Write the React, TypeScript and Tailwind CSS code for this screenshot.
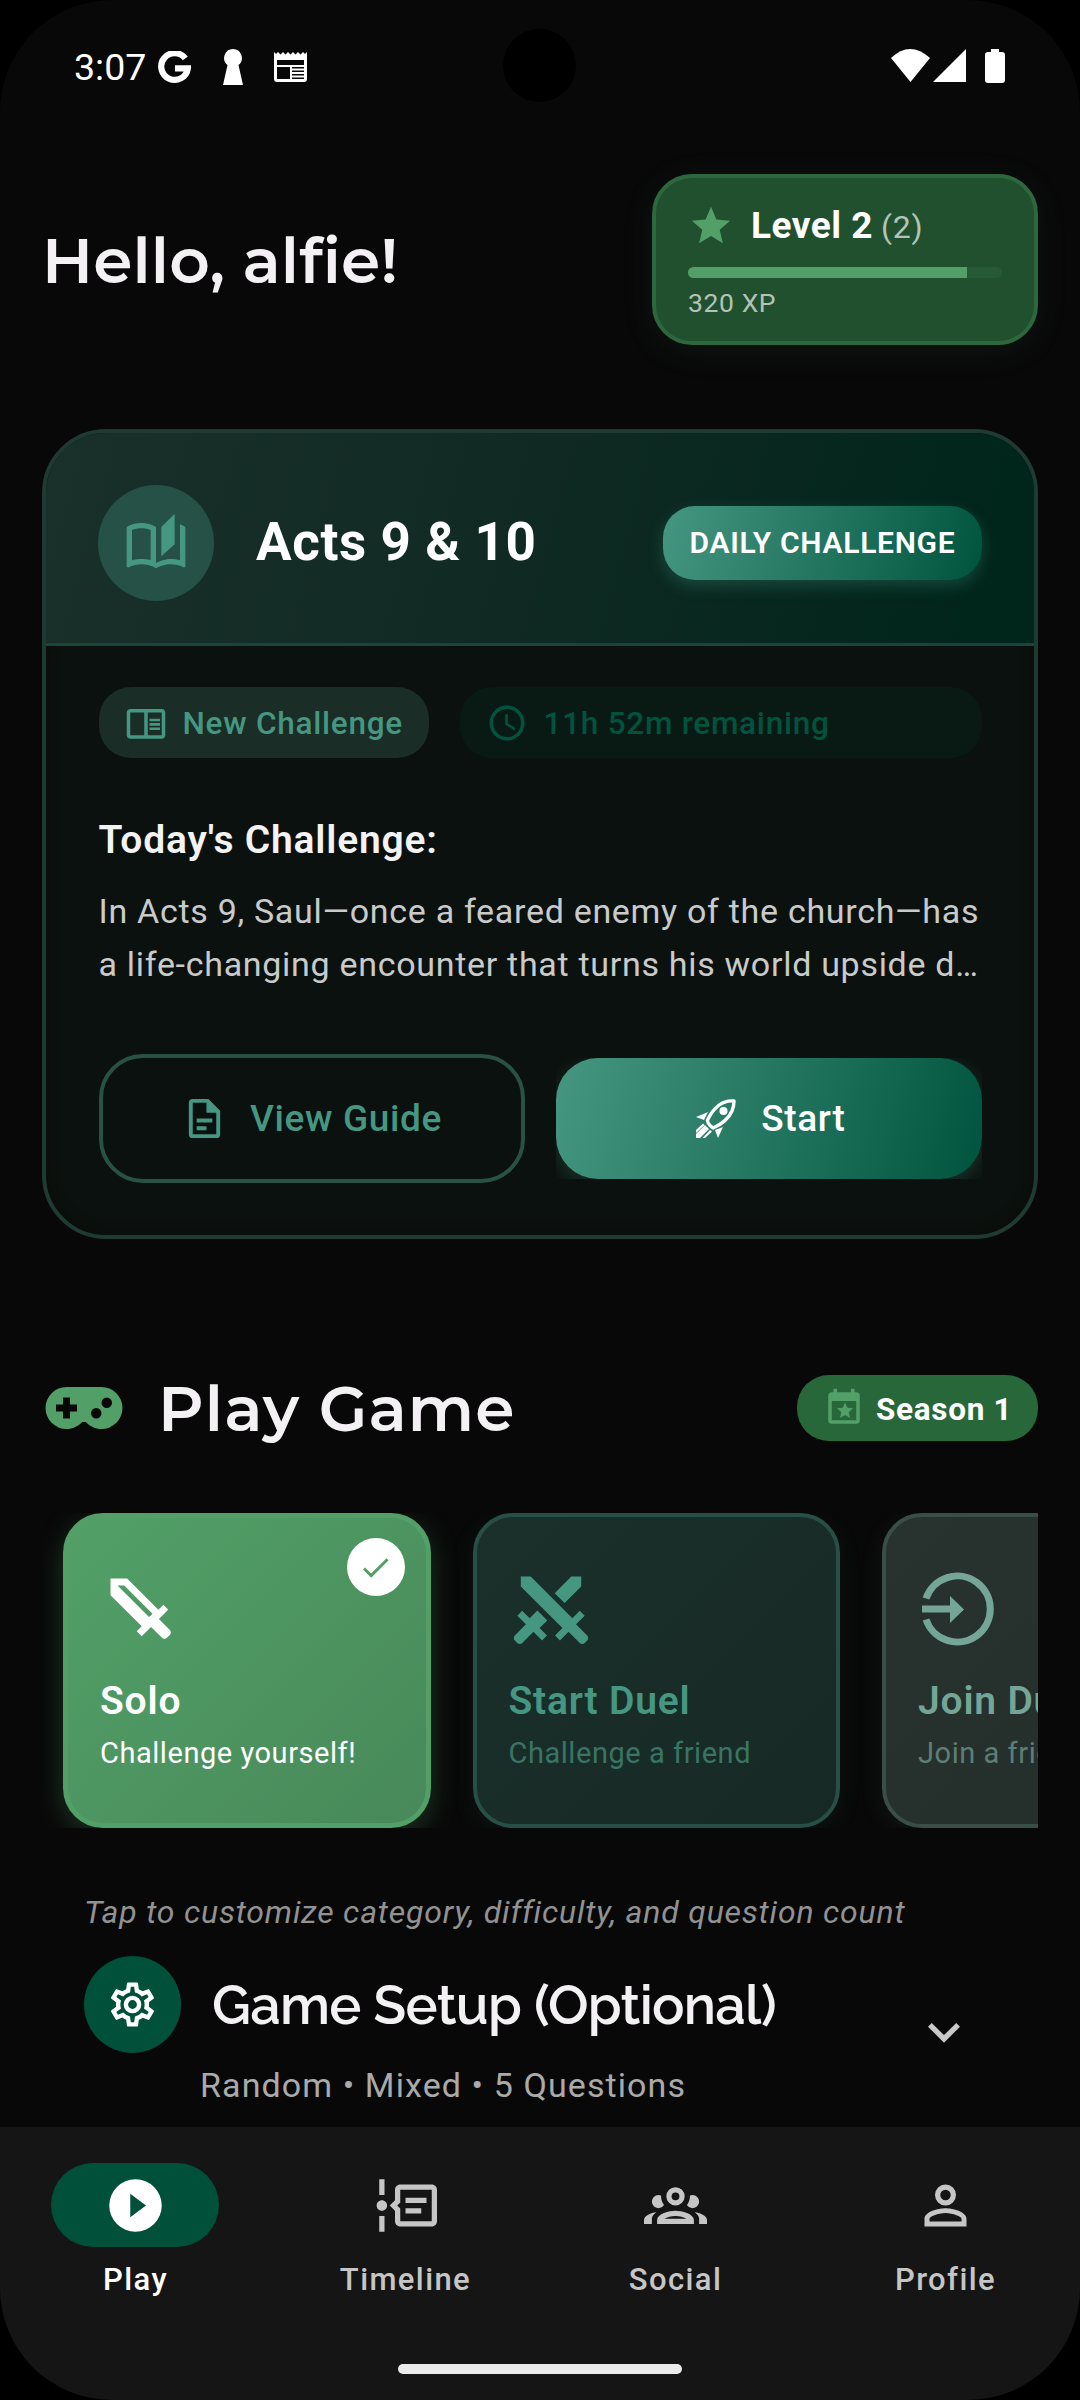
import React from "react";
import { MdOutlineChromeReaderMode, MdStar, MdCheck } from "react-icons/md";

const P = {
  controller:
    "M7,6H17A6,6 0 0,1 23,12A6,6 0 0,1 17,18C15.22,18 13.63,17.23 12.53,16H11.47C10.37,17.23 8.78,18 7,18A6,6 0 0,1 1,12A6,6 0 0,1 7,6M6,9V11H4V13H6V15H8V13H10V11H8V9H6M15.5,12A1.5,1.5 0 0,0 14,13.5A1.5,1.5 0 0,0 15.5,15A1.5,1.5 0 0,0 17,13.5A1.5,1.5 0 0,0 15.5,12M18.5,9A1.5,1.5 0 0,0 17,10.5A1.5,1.5 0 0,0 18.5,12A1.5,1.5 0 0,0 20,10.5A1.5,1.5 0 0,0 18.5,9Z",
  sword:
    "M6.92,5H5L14,14L15,13.06M19.96,19.12L19.12,19.96C18.73,20.35 18.1,20.35 17.71,19.96L14.59,16.84L11.91,19.5L10.5,18.09L11.92,16.67L3,7.75V3H7.75L16.67,11.92L18.09,10.5L19.5,11.91L16.83,14.58L19.95,17.7C20.35,18.1 20.35,18.73 19.96,19.12Z",
  swordCross:
    "M6.2,2.44L18.1,14.34L20.22,12.22L21.63,13.63L19.16,16.1L22.34,19.28C22.73,19.67 22.73,20.3 22.34,20.69L21.63,21.4C21.24,21.79 20.61,21.79 20.22,21.4L17,18.23L14.56,20.7L13.15,19.29L15.27,17.17L3.37,5.27V2.44H6.2M15.89,10L20.63,5.26V2.44H17.8L13.06,7.18L15.89,10M10.94,15L8.11,12.13L5.9,14.34L3.78,12.22L2.37,13.63L4.84,16.1L1.66,19.29C1.27,19.68 1.27,20.31 1.66,20.7L2.37,21.41C2.76,21.8 3.39,21.8 3.78,21.41L7,18.23L9.44,20.7L10.85,19.29L8.73,17.17L10.94,15Z",
  book: "M19 1L14 6V17L19 12.5V1M21 5V18.5C19.9 18.15 18.7 18 17.5 18C15.8 18 13.35 18.65 12 19.5V6C10.55 4.9 8.45 4.5 6.5 4.5C4.55 4.5 2.45 4.9 1 6V20.65C1 20.9 1.25 21.15 1.5 21.15C1.6 21.15 1.65 21.1 1.75 21.1C3.1 20.45 5.05 20 6.5 20C8.45 20 10.55 20.4 12 21.5C13.35 20.65 15.8 20 17.5 20C19.15 20 20.85 20.3 22.25 21.05C22.35 21.1 22.4 21.1 22.5 21.1C22.75 21.1 23 20.85 23 20.6V6C22.4 5.55 21.75 5.25 21 5M10 18.41C8.75 18.09 7.5 18 6.5 18C5.44 18 4.18 18.19 3 18.5V7.13C3.91 6.73 5.14 6.5 6.5 6.5C7.86 6.5 9.09 6.73 10 7.13V18.41Z",
  clock:
    "M12,20A8,8 0 0,0 20,12A8,8 0 0,0 12,4A8,8 0 0,0 4,12A8,8 0 0,0 12,20M12,2A10,10 0 0,1 22,12A10,10 0 0,1 12,22C6.47,22 2,17.5 2,12A10,10 0 0,1 12,2M12.5,7V12.25L17,14.92L16.25,16.15L11,13V7H12.5Z",
  file: "M6,2A2,2 0 0,0 4,4V20A2,2 0 0,0 6,22H18A2,2 0 0,0 20,20V8L14,2H6M6,4H13V9H18V20H6V4M8,12V14H16V12H8M8,16V18H13V16H8Z",
  calendar:
    "M19,19H5V8H19M19,3H18V1H16V3H8V1H6V3H5A2,2 0 0,0 3,5V19A2,2 0 0,0 5,21H19A2,2 0 0,0 21,19V5A2,2 0 0,0 19,3M9.7,17.7L10.5,14.4L8,12.2L11.3,11.9L12.6,8.9L13.9,11.9L17.2,12.2L14.7,14.4L15.5,17.7L12.6,16Z",
  cog: "M12,8A4,4 0 0,1 16,12A4,4 0 0,1 12,16A4,4 0 0,1 8,12A4,4 0 0,1 12,8M12,10A2,2 0 0,0 10,12A2,2 0 0,0 12,14A2,2 0 0,0 14,12A2,2 0 0,0 12,10M10,22C9.75,22 9.54,21.82 9.5,21.58L9.13,18.93C8.5,18.68 7.96,18.34 7.44,17.94L4.95,18.95C4.73,19.03 4.46,18.95 4.34,18.73L2.34,15.27C2.21,15.05 2.27,14.78 2.46,14.63L4.57,12.97L4.5,12L4.57,11L2.46,9.37C2.27,9.22 2.21,8.95 2.34,8.73L4.34,5.27C4.46,5.05 4.73,4.96 4.95,5.05L7.44,6.05C7.96,5.66 8.5,5.32 9.13,5.07L9.5,2.42C9.54,2.18 9.75,2 10,2H14C14.25,2 14.46,2.18 14.5,2.42L14.87,5.07C15.5,5.32 16.04,5.66 16.56,6.05L19.05,5.05C19.27,4.96 19.54,5.05 19.66,5.27L21.66,8.73C21.79,8.95 21.73,9.22 21.54,9.37L19.43,11L19.5,12L19.43,13L21.54,14.63C21.73,14.78 21.79,15.05 21.66,15.27L19.66,18.73C19.54,18.95 19.27,19.04 19.05,18.95L16.56,17.95C16.04,18.34 15.5,18.68 14.87,18.93L14.5,21.58C14.46,21.82 14.25,22 14,22H10M11.25,4L10.88,6.61C9.68,6.86 8.62,7.5 7.85,8.39L5.44,7.35L4.69,8.65L6.8,10.2C6.4,11.37 6.4,12.64 6.8,13.8L4.68,15.36L5.43,16.66L7.86,15.62C8.63,16.5 9.68,17.14 10.87,17.38L11.24,20H12.76L13.13,17.39C14.32,17.14 15.37,16.5 16.14,15.62L18.57,16.66L19.32,15.36L17.2,13.81C17.6,12.64 17.6,11.37 17.2,10.2L19.31,8.65L18.56,7.35L16.15,8.39C15.38,7.5 14.32,6.86 13.12,6.62L12.75,4H11.25Z",
  play: "M10,16.5V7.5L16,12M12,2A10,10 0 0,0 2,12A10,10 0 0,0 12,22A10,10 0 0,0 22,12A10,10 0 0,0 12,2Z",
  account:
    "M12,4A4,4 0 0,1 16,8A4,4 0 0,1 12,12A4,4 0 0,1 8,8A4,4 0 0,1 12,4M12,6A2,2 0 0,0 10,8A2,2 0 0,0 12,10A2,2 0 0,0 14,8A2,2 0 0,0 12,6M12,13C14.67,13 20,14.33 20,17V20H4V17C4,14.33 9.33,13 12,13M12,14.9C9.03,14.9 5.9,16.36 5.9,17V18.1H18.1V17C18.1,16.36 14.97,14.9 12,14.9Z",
  group:
    "M12,5A3.5,3.5 0 0,0 8.5,8.5A3.5,3.5 0 0,0 12,12A3.5,3.5 0 0,0 15.5,8.5A3.5,3.5 0 0,0 12,5M12,7A1.5,1.5 0 0,1 13.5,8.5A1.5,1.5 0 0,1 12,10A1.5,1.5 0 0,1 10.5,8.5A1.5,1.5 0 0,1 12,7M5.5,8A2.5,2.5 0 0,0 3,10.5C3,11.44 3.53,12.25 4.29,12.68C4.65,12.88 5.06,13 5.5,13C5.94,13 6.35,12.88 6.71,12.68C7.08,12.47 7.39,12.17 7.62,11.81C6.89,10.86 6.5,9.7 6.5,8.5C6.5,8.41 6.5,8.31 6.5,8.22C6.2,8.08 5.86,8 5.5,8M18.5,8C18.14,8 17.8,8.08 17.5,8.22C17.5,8.31 17.5,8.41 17.5,8.5C17.5,9.7 17.11,10.86 16.38,11.81C16.5,12 16.63,12.15 16.78,12.3C16.94,12.45 17.1,12.58 17.29,12.68C17.65,12.88 18.06,13 18.5,13C18.94,13 19.35,12.88 19.71,12.68C20.47,12.25 21,11.44 21,10.5A2.5,2.5 0 0,0 18.5,8M12,14C9.66,14 5,15.17 5,17.5V19H19V17.5C19,15.17 14.34,14 12,14M4.71,14.55C2.78,14.78 0,15.76 0,17.5V19H3V17.07C3,16.06 3.69,15.22 4.71,14.55M19.29,14.55C20.31,15.22 21,16.06 21,17.07V19H24V17.5C24,15.76 21.22,14.78 19.29,14.55M12,16C13.53,16 15.24,16.5 16.23,17H7.77C8.76,16.5 10.47,16 12,16Z",
  timeline:
    "M4 2V8H2V2H4M2 22H4V16H2V22M5 12C5 13.11 4.11 14 3 14S1 13.11 1 12 1.9 10 3 10 5 10.89 5 12M24 6V18C24 19.11 23.11 20 22 20H10C8.89 20 8 19.11 8 18V14L6 12L8 10V6C8 4.89 8.89 4 10 4H22C23.11 4 24 4.89 24 6M22 6H10V10.83L8.83 12L10 13.17V18H22V6M12 9H20V11H12V9M12 13H18V15H12V13Z",
  chevron: "M7.41,8.58L12,13.17L16.59,8.58L18,10L12,16L6,10L7.41,8.58Z",
};

function Icon({ d, className = "" }: { d: string; className?: string }) {
  return (
    <svg viewBox="0 0 24 24" fill="currentColor" fillRule="evenodd" className={`shrink-0 ${className}`}>
      <path d={d} />
    </svg>
  );
}

function StatusBar() {
  return (
    <header className="flex h-[132px] items-center pl-[74px] pr-[74px] text-white">
      <span className="w-[84px] whitespace-nowrap pt-[2px] text-[37.5px] leading-[44px]">3:07</span>
      <svg viewBox="0 0 32 32" className="mt-[2px] h-[33px] w-[33px]" fill="none" stroke="white" strokeWidth="6">
        <path d="M26.5 7.2A13 13 0 1 0 29 16.8H16.5" />
      </svg>
      <svg viewBox="0 0 20 36" className="ml-[32px] mt-[2px] h-[36px] w-[20px]" fill="white">
        <path d="M10 0a9 9 0 0 1 5.5 16L20 36H0L4.500 16A9 9 0 0 1 10 0Z" />
      </svg>
      <svg viewBox="0 0 33 30" className="ml-[31px] mt-[2px] h-[30px] w-[33px]">
        <path fill="white" d="M0 0l2 2 2-2 2.500 2.500L9 0l2.500 2.500L14 0l2.500 2.500L19 0l2.500 2.500L24 0l2.500 2.500L29 0l2 2 2-2v27a3 3 0 0 1-3 3H3a3 3 0 0 1-3-3Z" />
        <path fill="#080808" d="M3 8h27v5H3zM3 15h13v12H3zM18 15h12v1.500H18zM18 18.500h12V20H18zM18 22h12v1.500H18zM18 25.500h12V27H18z" />
      </svg>
      <svg viewBox="0 0 116 36" className="ml-auto mt-[2px] h-[36px] w-[116px]" fill="white">
        <path d="M1 9Q20-9 40 9L20.500 33Z" />
        <path d="M76 0V33H43Z" />
        <path d="M101 0h8v3h3a3 3 0 0 1 3 3v25a3 3 0 0 1-3 3H98a3 3 0 0 1-3-3V6a3 3 0 0 1 3-3h3Z" />
      </svg>
    </header>
  );
}

function LevelCard() {
  return (
    <div className="h-[171px] w-[386px] rounded-[40px] border-4 border-[#2c673e] bg-[#21502e] px-8 pt-[26px] shadow-[0_6px_32px_rgba(82,160,104,0.10)]">
      <div className="flex h-[44px] items-center">
        <MdStar className="h-[46px] w-[46px] text-[#52a068]" />
        <span className="ml-[17px] text-[37px] font-bold tracking-[0.5px] text-white">Level 2</span>
        <span className="ml-[8px] mt-[2px] text-[32px] tracking-[0.8px] text-[#b3c4b7]">(2)</span>
      </div>
      <div className="mt-[19px] h-[11px] overflow-hidden rounded-full bg-[#265935]">
        <div className="h-full bg-[#52a068]" style={{ width: "88.7%" }} />
      </div>
      <div className="mt-[8px] text-[26.5px] leading-[34px] tracking-[0.6px] text-[#b3c4b7]">320 XP</div>
    </div>
  );
}

function Rocket() {
  return (
    <svg viewBox="0 0 40 40" className="h-[40px] w-[40px]" fill="white">
      <path fill="none" stroke="white" strokeWidth="3.4" strokeLinejoin="round" d="M38 2C27 1 18 8 11.500 21Q11 23 14 26.500L17 29Q31 23 36 12Q38 7 38 2Z" />
      <circle cx="27.500" cy="12" r="4" />
      <path d="M0 18L12 13L8 21ZM27 28L22 39L19 31ZM0 39L0 35L9 26L13 30L4 39ZM0 31L7 24.500L8.500 26L0 34ZM6.500 39L14 31L16 32.500L9 39Z" />
    </svg>
  );
}

function DailyCard() {
  return (
    <section className="mt-[84px] h-[810px] overflow-hidden rounded-[64px] border-4 border-[#1e3a32] bg-[#0b110e] shadow-[inset_0_0_14px_#080b08]">
      <div className="flex h-[213px] items-center border-b-[3px] border-[#1b4539] bg-[linear-gradient(105deg,#1a302a_0%,#102a23_48%,#00251b_94%)] pl-[52px] pr-[52px] pt-[9px]">
        <div className="grid h-[116px] w-[116px] place-items-center rounded-full bg-[#265146]">
          <Icon d={P.book} className="h-[64px] w-[64px] text-[#469782]" />
        </div>
        <h2 className="ml-[42px] text-[53px] font-bold tracking-[0.6px] text-white">Acts 9 &amp; 10</h2>
        <div className="ml-auto grid h-[74px] w-[319px] place-items-center whitespace-nowrap rounded-[32px] bg-[linear-gradient(105deg,#469782,#00543d)] text-[30px] font-semibold tracking-[0.7px] text-white shadow-[0_6px_16px_rgba(70,151,130,0.3)]">
          DAILY CHALLENGE
        </div>
      </div>
      <div className="pl-[52.5px] pr-[52px] pt-[41px]">
        <div className="flex h-[71px] gap-[31px] text-[31.5px] font-medium tracking-[0.75px]">
          <div className="flex w-[330px] items-center rounded-[32px] bg-[#1a2d27] pl-[26px] text-[#469782]">
            <MdOutlineChromeReaderMode className="h-[42px] w-[42px] shrink-0" />
            <span className="ml-[16px] mt-[3px] whitespace-nowrap">New Challenge</span>
          </div>
          <div className="flex flex-1 items-center rounded-[32px] bg-[#091a15] pl-[26px] text-[#00543d]">
            <Icon d={P.clock} className="h-[42px] w-[42px]" />
            <span className="ml-[16px] mt-[3px] whitespace-nowrap">11h 52m remaining</span>
          </div>
        </div>
        <h3 className="mt-[56px] text-[39px] font-semibold leading-[52px] tracking-[0.8px] text-[#f3f3f3]">Today's Challenge:</h3>
        <p className="mt-[19px] whitespace-nowrap text-[34px] leading-[53px] tracking-[0.7px] text-[#c9cbca]">
          In Acts 9, Saul—once a feared enemy of the church—has
          <br />a life-changing encounter that turns his world upside d…
        </p>
        <div className="mt-[63px] flex items-center gap-[31px] text-[37px] font-medium tracking-[0.65px]">
          <button className="flex h-[129px] w-[426px] items-center justify-center rounded-[44px] border-4 border-[#275244] text-[#469782]">
            <Icon d={P.file} className="h-[47px] w-[47px]" />
            <span className="ml-[22px]">View Guide</span>
          </button>
          <div className="h-[121px] flex-1 overflow-hidden">
            <button className="flex h-full w-full items-center justify-center rounded-[42px] bg-[linear-gradient(105deg,#469782,#00543d)] text-white shadow-[0_6px_20px_rgba(70,151,130,0.28)]">
              <Rocket />
              <span className="ml-[25px] mr-[-4px]">Start</span>
            </button>
          </div>
        </div>
      </div>
    </section>
  );
}

function ModeCards() {
  return (
    <div className="mt-[72px] flex h-[315px] gap-[42px] overflow-hidden pl-[21px]">
      <div className="relative h-[315px] w-[367.5px] shrink-0 rounded-[40px] border-[5px] border-[#52a068] bg-[linear-gradient(135deg,#52a068,#488959)] px-[32px] pt-[50px] text-white shadow-[0_8px_28px_rgba(82,160,104,0.3)]">
        <div className="absolute right-[21px] top-[20px] grid h-[58px] w-[58px] place-items-center rounded-full bg-white">
          <MdCheck className="h-[35px] w-[35px] text-[#52a068]" />
        </div>
        <Icon d={P.sword} className="h-[84px] w-[84px]" />
        <h3 className="mt-[26px] text-[39px] font-semibold leading-[46px] tracking-[0.8px]">Solo</h3>
        <p className="mt-[12px] text-[29px] leading-[34px] tracking-[0.55px]">Challenge yourself!</p>
      </div>
      <div className="h-[315px] w-[367.5px] shrink-0 rounded-[40px] border-4 border-[#274f45] bg-[linear-gradient(135deg,#1b302b,#172925)] px-[32px] pt-[51px] text-[#469782] shadow-[0_6px_24px_rgba(70,151,130,0.1)]">
        <Icon d={P.swordCross} className="h-[84px] w-[84px]" />
        <h3 className="mt-[26px] text-[39px] font-semibold leading-[46px] tracking-[0.8px]">Start Duel</h3>
        <p className="mt-[12px] text-[29px] leading-[34px] tracking-[0.55px] text-[#397564]">Challenge a friend</p>
      </div>
      <div className="h-[315px] w-[367.5px] shrink-0 rounded-[40px] border-4 border-[#3a4e48] bg-[linear-gradient(135deg,#283330,#232d2a)] px-[32px] pt-[51px] text-[#74a597] shadow-[0_6px_24px_rgba(116,165,151,0.1)]">
        <svg viewBox="0 0 84 84" className="h-[84px] w-[84px]">
          <path d="M8 30.500A33 33 0 1 1 8 51.500" fill="none" stroke="currentColor" strokeWidth="7" />
          <path d="M4 37.500H32V28L46 41.500L32 55V44.500H4Z" fill="currentColor" />
        </svg>
        <h3 className="mt-[26px] whitespace-nowrap text-[39px] font-semibold leading-[46px] tracking-[0.8px]">Join Duel</h3>
        <p className="mt-[12px] whitespace-nowrap text-[29px] leading-[34px] tracking-[0.55px] text-[#5d7f76]">Join a friend</p>
      </div>
    </div>
  );
}

const tabs = [
  { label: "Play", icon: P.play, active: true },
  { label: "Timeline", icon: P.timeline, active: false },
  { label: "Social", icon: P.group, active: false },
  { label: "Profile", icon: P.account, active: false },
];

export default function App() {
  return (
    <div className="h-[2400px] w-[1080px] bg-black font-['Roboto',sans-serif]">
      <div className="relative flex h-full flex-col overflow-hidden rounded-[112px] bg-[#080808]">
        <div className="absolute left-[503px] top-[29px] h-[73px] w-[73px] rounded-full bg-black" />
        <StatusBar />
        <main className="flex-1 overflow-hidden px-[42px] pt-[42px]">
          <div className="flex items-center justify-between">
            <h1 className="pt-[3px] text-[63px] font-semibold tracking-[0.15px] text-[#f3f1f3] [font-family:Montserrat,Inter,sans-serif]">Hello, alfie!</h1>
            <LevelCard />
          </div>
          <DailyCard />
          <div className="mt-[136px] flex h-[66px] items-center">
            <Icon d={P.controller} className="h-[84px] w-[84px] text-[#52a068]" />
            <h2 className="ml-[32px] mt-[2px] text-[63px] font-semibold tracking-[1.1px] text-[#f3f1f3] [font-family:Montserrat,Inter,sans-serif]">Play Game</h2>
            <div className="ml-auto flex h-[66px] w-[241px] items-center rounded-[32px] bg-[#276739] pl-[26px] text-[31.5px] font-bold tracking-[0.7px] text-white">
              <Icon d={P.calendar} className="h-[42px] w-[42px] text-[#52a068]" />
              <span className="ml-[11px] mt-[3px] whitespace-nowrap">Season 1</span>
            </div>
          </div>
          <ModeCards />
          <section className="px-[42px] pt-[62px]">
            <p className="whitespace-nowrap text-[32px] italic leading-[44px] tracking-[0.8px] text-[#929292]">Tap to customize category, difficulty, and question count</p>
            <div className="mt-[22px] flex items-start">
              <div className="grid h-[97px] w-[97px] place-items-center rounded-full bg-[#00503a]">
                <Icon d={P.cog} className="h-[53px] w-[53px] text-white" />
              </div>
              <h2 className="ml-[31px] whitespace-nowrap text-[54px] font-semibold leading-[99px] tracking-[-0.7px] text-[#f3f1f3] [font-family:Raleway,Lato,sans-serif]">Game Setup (Optional)</h2>
              <Icon d={P.chevron} className="ml-auto mr-[20px] mt-[44px] h-[64px] w-[64px] text-[#c9c9c9]" />
            </div>
            <p className="-mt-[2px] ml-[116px] text-[34px] leading-[46px] tracking-[1.1px] text-[#aaaaaa]">Random • Mixed • 5 Questions</p>
          </section>
        </main>
        <nav className="h-[273px] bg-[#151515] pt-[36px]">
          <div className="grid grid-cols-4">
            {tabs.map((t) => (
              <div key={t.label} className={t.active ? "flex flex-col items-center text-white" : "flex flex-col items-center text-[#c6c6c6]"}>
                <div className={t.active ? "grid h-[84px] w-[168px] place-items-center rounded-full bg-[#00503a]" : "grid h-[84px] w-[168px] place-items-center"}>
                  <Icon d={t.icon} className="h-[63px] w-[63px]" />
                </div>
                <span className="mt-[14px] pl-[1px] text-[31px] font-medium leading-[38px] tracking-[1.4px]">{t.label}</span>
              </div>
            ))}
          </div>
          <div className="mx-auto mt-[65px] h-[10px] w-[284px] rounded-full bg-[#ebebeb]" />
        </nav>
      </div>
    </div>
  );
}
